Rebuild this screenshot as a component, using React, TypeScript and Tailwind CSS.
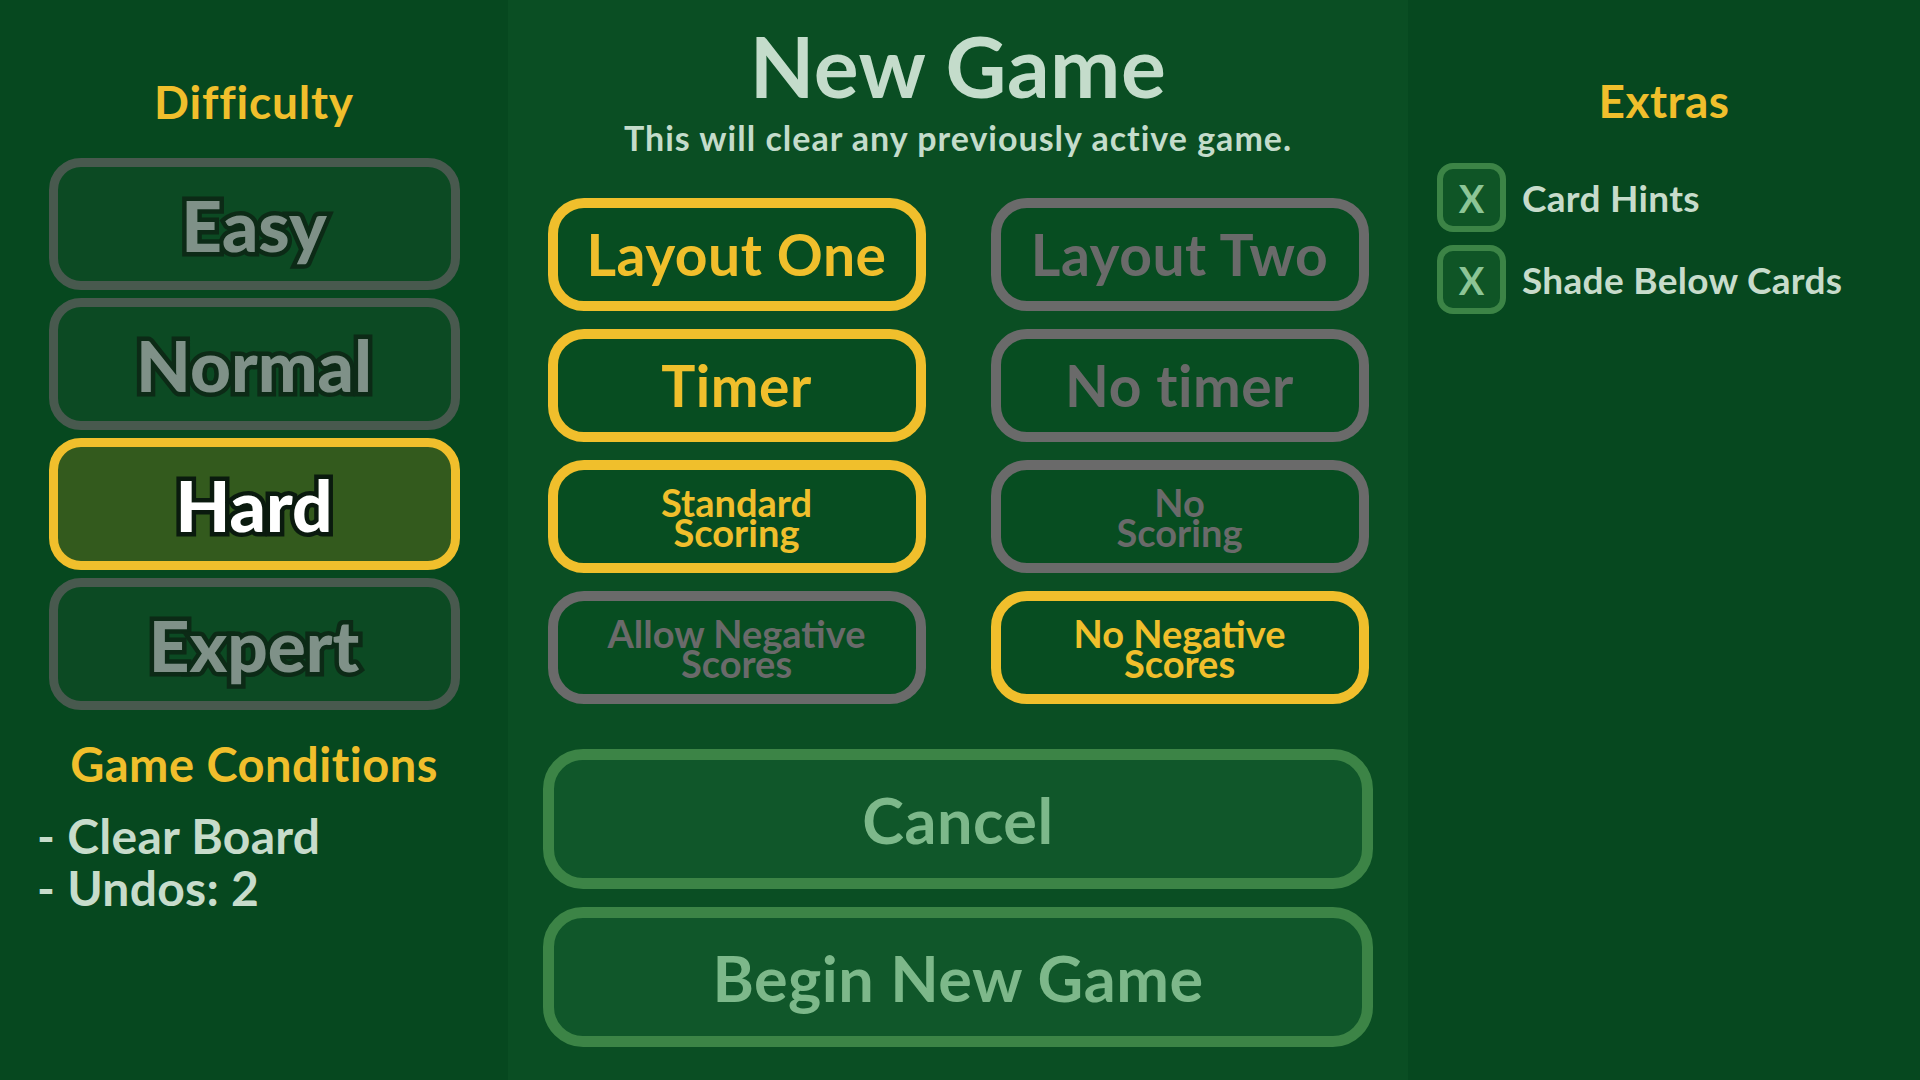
const font = "font-['Lato','Open_Sans',sans-serif]"

const difficulties = [
  { label: 'Easy', active: false },
  { label: 'Normal', active: false },
  { label: 'Hard', active: true },
  { label: 'Expert', active: false },
]

const options = [
  { label: 'Layout One', active: true, big: true },
  { label: 'Layout Two', active: false, big: true },
  { label: 'Timer', active: true, big: true },
  { label: 'No timer', active: false, big: true },
  { label: 'Standard\nScoring', active: true, big: false },
  { label: 'No\nScoring', active: false, big: false },
  { label: 'Allow Negative\nScores', active: false, big: false },
  { label: 'No Negative\nScores', active: true, big: false },
]

function DifficultyButton({ label, active }: { label: string; active: boolean }) {
  return (
    <button
      className={
        active
          ? 'flex h-[132px] w-[411px] items-center justify-center rounded-[32px] border-[9px] border-[#f0bf2c] bg-[#335a1d]'
          : 'flex h-[132px] w-[411px] items-center justify-center rounded-[32px] border-[9px] border-[#48594e] bg-[#0c4a23]'
      }
    >
      <span
        className={
          active
            ? "text-[71px] font-black leading-none text-white [paint-order:stroke_fill] [-webkit-text-stroke:9px_#0a1a0e] font-['Lato',sans-serif]"
            : "text-[71px] font-black leading-none text-[#7f9188] [paint-order:stroke_fill] [-webkit-text-stroke:9px_#0c2a16] font-['Lato',sans-serif]"
        }
      >
        {label}
      </span>
    </button>
  )
}

function OptionButton({ label, active, big }: { label: string; active: boolean; big: boolean }) {
  return (
    <button
      className={
        active
          ? 'flex h-[113px] items-center justify-center rounded-[36px] border-[10px] border-[#f0bf2c] bg-[#074d21] text-[#f0bf2c]'
          : 'flex h-[113px] items-center justify-center rounded-[36px] border-[10px] border-[#6a6a6a] bg-[#074d21] text-[#6a6a6a]'
      }
    >
      {big ? (
        <span className="text-[57px] font-bold leading-none tracking-[0.5px]">{label}</span>
      ) : (
        <span className="whitespace-pre text-center text-[38px] font-bold leading-[30px]">{label}</span>
      )}
    </button>
  )
}

function WideButton({ label }: { label: string }) {
  return (
    <button className="flex h-[140px] w-[830px] items-center justify-center rounded-[40px] border-[11px] border-[#3c8446] bg-[#10572a] text-[63px] font-bold leading-none tracking-[0.5px] text-[#7db88a]">
      {label}
    </button>
  )
}

function Extra({ label }: { label: string }) {
  return (
    <div className="flex items-center gap-4">
      <div className="flex h-[69px] w-[69px] items-center justify-center rounded-[16px] border-[6px] border-[#3c8446] bg-[#0f5526] text-[38px] font-bold leading-none text-[#8cc596]">
        X
      </div>
      <span className="text-[37px] font-bold leading-none tracking-[0.3px] text-[#c7dccb]">{label}</span>
    </div>
  )
}

export default function App() {
  return (
    <div className={`flex h-[1080px] w-[1920px] overflow-hidden bg-[#06481f] ${font}`}>
      {/* Difficulty column */}
      <aside className="flex w-[508px] flex-col items-center pt-[79px]">
        <h2 className="text-[46px] font-bold leading-none tracking-[0.8px] text-[#f0bf2c]">Difficulty</h2>
        <div className="mt-[33px] flex flex-col gap-2">
          {difficulties.map((d) => (
            <DifficultyButton key={d.label} {...d} />
          ))}
        </div>
        <h2 className="mt-[31px] text-[47px] font-bold leading-none tracking-[0.5px] text-[#f0bf2c]">Game Conditions</h2>
        <div className="mt-[22px] self-start pl-[37px] text-[48px] font-bold leading-[52px] tracking-[0.3px] text-[#c7dccb]">
          <p>- Clear Board</p>
          <p>- Undos: 2</p>
        </div>
      </aside>

      {/* Main column */}
      <main className="flex w-[900px] flex-col items-center bg-[#0a4e23] pt-[24px]">
        <h1 className="text-[84px] font-bold leading-none tracking-[0.5px] text-[#c4dccb]">New Game</h1>
        <p className="mt-[13px] text-[34px] font-bold leading-none tracking-[1px] text-[#c4dccb]">
          This will clear any previously active game.
        </p>
        <div className="mt-[43px] grid w-[821px] grid-cols-2 gap-x-[65px] gap-y-[18px]">
          {options.map((o) => (
            <OptionButton key={o.label} {...o} />
          ))}
        </div>
        <div className="mt-[45px] flex flex-col gap-[18px]">
          <WideButton label="Cancel" />
          <WideButton label="Begin New Game" />
        </div>
      </main>

      {/* Extras column */}
      <aside className="flex flex-1 flex-col pt-[78px]">
        <h2 className="self-center text-[46px] font-bold leading-none tracking-[0.5px] text-[#f0bf2c]">Extras</h2>
        <div className="mt-[39px] flex flex-col gap-[13px] pl-[29px]">
          <Extra label="Card Hints" />
          <Extra label="Shade Below Cards" />
        </div>
      </aside>
    </div>
  )
}
